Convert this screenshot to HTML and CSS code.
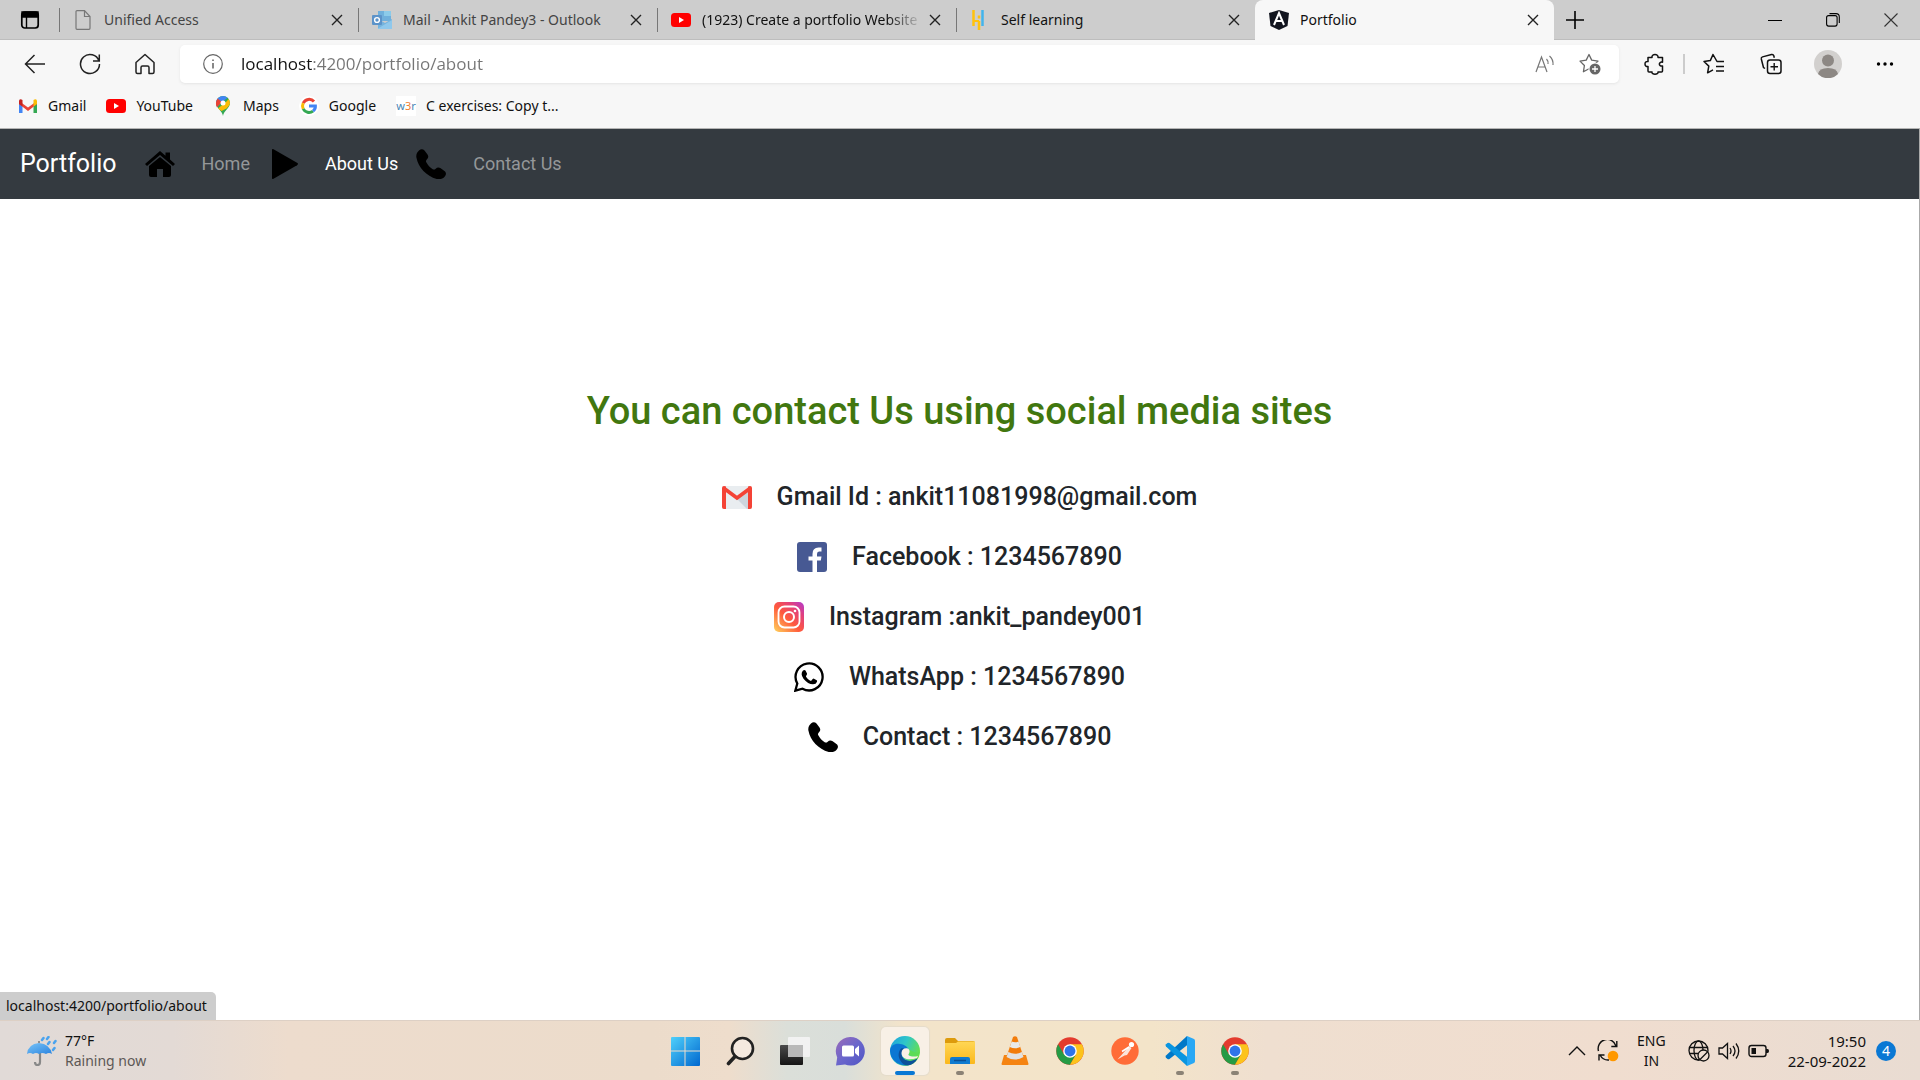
FILE: index.html
```html
<!DOCTYPE html>
<html lang="en">
<head>
<meta charset="utf-8">
<title>Portfolio</title>
<link rel="stylesheet" href="styles.css">
</head>
<body>
<svg class="defs" aria-hidden="true">
  <defs>
    <linearGradient id="win" x1="0" y1="0" x2="1" y2="1"><stop offset="0" stop-color="#4fd0fb"/><stop offset="1" stop-color="#0067cf"/></linearGradient>
    <linearGradient id="chatg" x1="0" y1="0" x2="1" y2="1"><stop offset="0" stop-color="#9c6bb8"/><stop offset=".5" stop-color="#6a66cc"/><stop offset="1" stop-color="#4f55c4"/></linearGradient>
    <linearGradient id="edgetop" x1="0" y1="0" x2="1" y2=".5"><stop offset="0" stop-color="#1c9fdf"/><stop offset=".5" stop-color="#2fc6c8"/><stop offset="1" stop-color="#66e04c"/></linearGradient>
    <linearGradient id="folderg" x1="0" y1="0" x2="0" y2="1"><stop offset="0" stop-color="#ffd755"/><stop offset="1" stop-color="#fbb81c"/></linearGradient>
    <linearGradient id="insta" x1="0" y1="1" x2="1" y2="0"><stop offset="0" stop-color="#ffd45c"/><stop offset=".45" stop-color="#ff5a3d"/><stop offset=".75" stop-color="#e2407c"/><stop offset="1" stop-color="#b13bd0"/></linearGradient>
    <linearGradient id="umb" x1="0" y1="0" x2="1" y2="1"><stop offset="0" stop-color="#79c4f7"/><stop offset="1" stop-color="#2b84e0"/></linearGradient>
    <linearGradient id="taskv" x1="0" y1="0" x2="0" y2="1"><stop offset="0" stop-color="#4a4a4a"/><stop offset="1" stop-color="#151515"/></linearGradient>
    <symbol id="x" viewBox="0 0 20 20"><path d="M5 5l10 10M15 5L5 15" fill="none" stroke="#222" stroke-width="1.4"/></symbol>
    <symbol id="yt" viewBox="0 0 20 20"><rect y="3" width="20" height="14" rx="3.5" fill="#f00"/><path d="M8 7l5 3-5 3z" fill="#fff"/></symbol>
    <symbol id="phone" viewBox="0 0 30 30"><path d="M3 1.500C5-.5 7 0 8.500 1.500l3 4c1.200 1.800 1 3.500-.5 4.800-1 1-1.300 1.800-.7 3 1.500 3 3.600 5.200 6.400 6.900 1.200.7 2 .5 3-.5 1.500-1.500 3.200-1.700 5-.4l3.700 2.800c1.700 1.300 2 3 .9 4.600-2 3-5 4.100-8.600 3.300C10.500 27 2.300 18.500.4 8.500-.1 5.600 1 3.300 3 1.500z" fill="#000"/></symbol>
    <symbol id="chrome" viewBox="0 0 48 48"><circle cx="24" cy="24" r="23.500" fill="#e33b2e"/><path d="M3.600 12.300A23.500 23.500 0 0 0 24 47.500l10.200-17.600L24 24 13.800 29.900z" fill="#259b45"/><path d="M24 47.500A23.500 23.500 0 0 0 44.400 12.300H24V24l10.200 5.900z" fill="#fcc31c"/><circle cx="24" cy="24" r="11.700" fill="#fff"/><circle cx="24" cy="24" r="9.300" fill="#2f74ea"/></symbol>
  </defs>
</svg>

<header class="browser">
  <div class="tabstrip">
    <button class="tab-actions" aria-label="Tab actions"><svg width="20" height="20" viewBox="0 0 20 20"><rect x="1.800" y="2" width="16.400" height="16" rx="3" fill="none" stroke="#000" stroke-width="1.700"/><path d="M2 2h16v5H2zM6.500 7v11" stroke="#000" stroke-width="1.400"/></svg></button>
    <div class="tabs">
      <div class="tab"><svg width="20" height="20" viewBox="0 0 20 20"><path d="M3 1.500Q3 .7 4 .7h7.500L17 6.500v11.800q0 1-1 1H4q-1 0-1-1zM11.500.7v5.800H17" fill="none" stroke="#777" stroke-width="1.200"/></svg><a href="#" class="tab-title muted">Unified Access</a><button class="close" aria-label="Close tab"><svg width="20" height="20"><use href="#x"/></svg></button></div>
      <div class="tab"><svg width="20" height="20" viewBox="0 0 20 20"><path d="M6 1h13v10H6z" fill="#6fb0dc"/><path d="M12 1h7v5h-7z" fill="#8bcbea"/><path d="M6 9l7 4 7-4v10H6z" fill="#75b3dd"/><path d="M6 18.500L20 10v9H6z" fill="#8fc8ec"/><rect y="5" width="10" height="10" rx="1" fill="#5c93c9"/><circle cx="5" cy="10" r="2.400" fill="none" stroke="#fff" stroke-width="1.400"/></svg><a href="#" class="tab-title muted">Mail - Ankit Pandey3 - Outlook</a><button class="close" aria-label="Close tab"><svg width="20" height="20"><use href="#x"/></svg></button></div>
      <div class="tab"><svg width="20" height="20"><use href="#yt"/></svg><a href="#" class="tab-title fade">(1923) Create a portfolio Website</a><button class="close" aria-label="Close tab"><svg width="20" height="20"><use href="#x"/></svg></button></div>
      <div class="tab"><svg width="20" height="20" viewBox="0 0 20 20"><path d="M3.500 0v16M9 5.500v3M9 11v9" stroke="#ffc20e" stroke-width="2.500"/><path d="M12.500 0v16" stroke="#42b4ec" stroke-width="2.500"/><path d="M4 11h5" stroke="#ffc20e" stroke-width="2"/></svg><a href="#" class="tab-title">Self learning</a><button class="close" aria-label="Close tab"><svg width="20" height="20"><use href="#x"/></svg></button></div>
      <div class="tab active"><svg width="20" height="20" viewBox="0 0 20 20"><path d="M10 0l10 3-1.500 13L10 20l-8.500-4L0 3z" fill="#12151f"/><path d="M5 15l5-12 5 12M7 11h6" fill="none" stroke="#fff" stroke-width="2"/></svg><a href="#" class="tab-title">Portfolio</a><button class="close" aria-label="Close tab"><svg width="20" height="20"><use href="#x"/></svg></button></div>
    </div>
    <button class="new-tab" aria-label="New tab"><svg width="20" height="20" viewBox="0 0 20 20"><path d="M10 1v18M1 10h18" stroke="#000" stroke-width="1.600"/></svg></button>
    <div class="window-controls">
      <button aria-label="Minimize"><svg width="14" height="14" viewBox="0 0 14 14"><path d="M0 7.500h14" stroke="#000"/></svg></button>
      <button aria-label="Restore"><svg width="14" height="14" viewBox="0 0 14 14"><rect x=".6" y="2.600" width="10.500" height="10.500" rx="2" fill="none" stroke="#000" stroke-width="1.100"/><path d="M3.500.6H10q3.300 0 3.300 3.300V10" fill="none" stroke="#000" stroke-width="1.100"/></svg></button>
      <button aria-label="Close"><svg width="14" height="14" viewBox="0 0 14 14"><path d="M.5.500l13 13M13.500.5l-13 13" stroke="#333" stroke-width="1.100"/></svg></button>
    </div>
  </div>

  <div class="toolbar">
    <div class="nav-buttons">
      <button aria-label="Back"><svg width="22" height="22" viewBox="0 0 22 22"><path d="M21 11H1.500M10.500 2l-9 9 9 9" fill="none" stroke="#222" stroke-width="1.500"/></svg></button>
      <button aria-label="Refresh"><svg width="22" height="22" viewBox="0 0 22 22"><path d="M20 8A9.500 9.500 0 1 0 20.500 11M20.300 1.500V8H14" fill="none" stroke="#222" stroke-width="1.500"/></svg></button>
      <button aria-label="Home"><svg width="22" height="22" viewBox="0 0 22 22"><path d="M2 9.500L11 1.500l9 8V19q0 1.500-1.500 1.500h-3.500v-6q0-1.500-1.500-1.500h-5q-1.500 0-1.500 1.500v6H3.500Q2 20.500 2 19z" fill="none" stroke="#222" stroke-width="1.500" stroke-linejoin="round"/></svg></button>
    </div>
    <div class="address">
      <svg width="20" height="20" viewBox="0 0 20 20"><circle cx="10" cy="10" r="9.300" fill="none" stroke="#666" stroke-width="1.200"/><path d="M10 9v5.500M10 5.500v1.500" stroke="#555" stroke-width="1.400"/></svg>
      <input class="url" type="text" aria-label="Address" value="localhost:4200/portfolio/about">
      <button aria-label="Read aloud"><svg width="20" height="20" viewBox="0 0 20 20"><path d="M1 18L6.500 3 12 18M3 13h7M11.500 5q2 2 1.500 5M14.500 2q4 3.500 3.500 9" fill="none" stroke="#777" stroke-width="1.200"/></svg></button>
      <button aria-label="Add to favorites"><svg width="22" height="22" viewBox="0 0 22 22"><path d="M10 1.500l2.700 5.600 6.300 1-4.600 4.400 1 6.200L10 15.800l-5.600 3 1-6.300L1 8.100l6.200-1z" fill="none" stroke="#666" stroke-width="1.300" stroke-linejoin="round"/><circle cx="16" cy="16" r="6.500" fill="#fff"/><circle cx="16" cy="16" r="5.500" fill="#666"/><path d="M16 13v6M13 16h6" stroke="#fff" stroke-width="1.300"/></svg></button>
    </div>
    <div class="tools">
      <button aria-label="Extensions"><svg width="22" height="22" viewBox="0 0 22 22"><path d="M4 4.500h4c-.8-4 6.800-4 6 0h4.500v4.700c-4.200-.8-4.200 4.600 0 3.800V18q0 1-1 1H14c.8 3-6.800 3-6 0H5q-1 0-1-1v-4.500c-4 .8-4-5.800 0-5z" fill="none" stroke="#111" stroke-width="1.500" stroke-linejoin="round"/></svg></button>
      <span class="divider"></span>
      <button aria-label="Favorites"><svg width="22" height="22" viewBox="0 0 22 22"><path d="M21 8.500h-7L10 1.500 7.300 7.600 1 8.500l4.800 4.600-1.200 6.700 5.400-3M13 13.500h8M13 18h8" fill="none" stroke="#111" stroke-width="1.500" stroke-linejoin="round"/></svg></button>
      <button aria-label="Collections"><svg width="22" height="22" viewBox="0 0 22 22"><path d="M5 15.500L3.500 14.500 1.300 6Q1 4.300 2.500 3.900L11.500 1.500q1.800-.4 2.300 1.300l.5 2" fill="none" stroke="#111" stroke-width="1.500"/><rect x="7.500" y="7" width="13.500" height="13.500" rx="2.500" fill="#f7f7f7" stroke="#111" stroke-width="1.500"/><path d="M14.200 10v7.500M10.500 13.700H18" stroke="#111" stroke-width="1.400"/></svg></button>
      <button aria-label="Profile"><svg width="28" height="28" viewBox="0 0 28 28"><circle cx="14" cy="14" r="14" fill="#d2d0ce"/><circle cx="14" cy="10.500" r="6" fill="#8d8884"/><path d="M4 24q1-6 10-6t10 6a14 14 0 0 1-20 0z" fill="#8d8884"/></svg></button>
      <button aria-label="Settings and more"><svg width="18" height="18" viewBox="0 0 18 18"><circle cx="2.500" cy="9" r="1.700"/><circle cx="9" cy="9" r="1.700"/><circle cx="15.500" cy="9" r="1.700"/></svg></button>
    </div>
  </div>

  <nav class="bookmarks" aria-label="Bookmarks">
    <a href="#"><svg width="20" height="20" viewBox="0 0 20 20"><path d="M1 5v12h3.500V8z" fill="#4285f4"/><path d="M19 5v12h-3.500V8z" fill="#34a853"/><path d="M1 5l9 6.500L19 5v3l-9 7-9-7z" fill="#ea4335"/><path d="M1 8V4.500q1-2 3.500-.5v6.500z" fill="#c5221f"/><path d="M19 8V4.500q-1-2-3.500-.5v6.500z" fill="#fbbc04"/></svg>Gmail</a>
    <a href="#"><svg width="20" height="20"><use href="#yt"/></svg>YouTube</a>
    <a href="#"><svg width="20" height="20" viewBox="0 0 20 20"><path d="M10 20C9.500 15 3 12 3 7a7 7 0 0 1 14 0c0 5-6.500 8-7 13z" fill="#34a853"/><path d="M3.800 10.500L14.500 1.800A7 7 0 0 0 3 7q0 2 .8 3.500z" fill="#4285f4"/><path d="M4.700 2.500l4 3.500L4 11.500Q1.500 7 4.700 2.500z" fill="#ea4335"/><path d="M5 12.500L14 5l1.500-2Q17 5 17 7.500q-1 3-3.500 5l-5 2.500z" fill="#fbbc04"/><circle cx="10" cy="7" r="2.500" fill="#fff"/></svg>Maps</a>
    <a href="#"><svg width="20" height="20" viewBox="0 0 20 20"><circle cx="10" cy="10" r="10" fill="#fff"/><g fill="none" stroke-width="3"><path d="M15 5.500A6.500 6.500 0 0 0 4.200 7.200" stroke="#ea4335"/><path d="M4.200 7.200a6.500 6.500 0 0 0 0 5.600" stroke="#fbbc05"/><path d="M4.200 12.800a6.500 6.500 0 0 0 9.800 2.300" stroke="#34a853"/><path d="M14 15.100A6 6 0 0 0 16.400 10H10" stroke="#4285f4"/></g></svg>Google</a>
    <a href="#"><span class="w3r">w<b>3</b>r</span>C exercises: Copy t...</a>
  </nav>
</header>

<div class="page">
  <nav class="navbar" aria-label="Main">
    <a href="#" class="brand">Portfolio</a>
    <a href="#" class="nav-item"><svg width="30" height="30" viewBox="0 0 30 30"><path d="M0 15L15 2l5.500 4.700V3.500h4.500v7.100L30 15l-2 2L15 6 2 17z"/><path d="M4 17L15 8l11 9v9q0 2-2 2h-6v-8h-6v8H6q-2 0-2-2z"/></svg><span>Home</span></a>
    <a href="#" class="nav-item current"><svg width="30" height="30" viewBox="0 0 30 30"><path d="M4 1q0-1.500 1.500-.7l23.500 13.500q2 1.200 0 2.400l-23.500 13.500Q4 30.500 4 29z"/></svg><span>About Us</span></a>
    <a href="#" class="nav-item"><svg width="30" height="30"><use href="#phone"/></svg><span>Contact Us</span></a>
  </nav>
  <main class="content">
    <h1>You can contact Us using social media sites</h1>
    <ul class="contacts">
      <li><svg width="30" height="30" viewBox="0 0 30 30"><rect y="4" width="30" height="23" rx="2" fill="#e9edf0"/><path d="M15 17l11-9v19h-1z" fill="#cdd5dd"/><path d="M0 6q0-2 2-2l2 .5V27H2q-2 0-2-2zM30 6q0-2-2-2l-2 .5V27h2q2 0 2-2z" fill="#f44336"/><path d="M1.500 6L15 16 28.500 6" fill="none" stroke="#f44336" stroke-width="3.800"/></svg>Gmail Id : ankit11081998@gmail.com</li>
      <li><svg width="30" height="30" viewBox="0 0 30 30"><rect width="30" height="30" rx="3" fill="#475993"/><path d="M15.500 30V18.500h-4v-4h4V12q0-6.500 6-6.500h3V9.500H22q-2 0-2 2.500v2.500h4.500l-.7 4H20V30z" fill="#fff"/></svg>Facebook : 1234567890</li>
      <li><svg width="30" height="30" viewBox="0 0 30 30"><rect width="30" height="30" rx="5" fill="url(#insta)"/><rect x="4.500" y="4.500" width="21" height="21" rx="6" fill="none" stroke="#fff" stroke-width="1.800"/><circle cx="15" cy="15" r="5" fill="none" stroke="#fff" stroke-width="2"/><circle cx="21" cy="9" r="1.300" fill="#fff"/></svg>Instagram :ankit_pandey001</li>
      <li><svg width="30" height="30" viewBox="0 0 30 30"><path d="M1.300 28.700L3.300 21.500A13.500 13.500 0 1 1 8.500 26.700z" fill="none" stroke="#000" stroke-width="2.300"/><path d="M9 8.500q1.500-1 2.500 0l1.500 3q.3 1-.8 2.200-.5.700 0 1.300 1.500 2.500 4 3.700.8.300 1.300-.3l1.200-1.400q.5-.6 1.300-.3l2.700 1.500q.6.400.3 1.500-.8 2.500-4 2.600-5 0-9.500-5.500-3.500-5-.5-8.300z"/></svg>WhatsApp : 1234567890</li>
      <li><svg width="30" height="30"><use href="#phone"/></svg>Contact : 1234567890</li>
    </ul>
  </main>
  <div class="status">localhost:4200/portfolio/about</div>
</div>

<footer class="taskbar">
  <button class="weather"><svg width="30" height="30" viewBox="0 0 30 30"><path d="M13 14v12q0 3-2.500 3T8 26" fill="none" stroke="#888" stroke-width="2.200"/><path d="M0 18Q1 8 12 7q11 1 13 11-3-2-6 0-4-2-7 0-3-2-6 0-3-2-6 0z" fill="url(#umb)"/><path d="M15 4l1.500-2M20 3l1.500-2M21 8l1.500-2M27 7l1.500-2M26 14l1.500-2" stroke="#4aa3ee" stroke-width="2.500" stroke-linecap="round"/><path d="M12 7V5" stroke="#777" stroke-width="1.500"/></svg><span class="weather-text"><span>77°F</span><span class="dim">Raining now</span></span></button>

  <div class="apps">
    <button aria-label="Start"><svg width="30" height="30" viewBox="0 0 30 30"><path d="M1 2q0-1 1-1h12.500v13.500H1zM15.500 1H29q1 0 1 1v12.500H15.500zM1 15.500h13.500V30H2q-1 0-1-1zM15.500 15.500H30V29q0 1-1 1H15.500z" fill="url(#win)"/></svg></button>
    <button aria-label="Search"><svg width="30" height="30" viewBox="0 0 30 30"><circle cx="17.500" cy="12.500" r="10.500" fill="#f4e9df" stroke="#222" stroke-width="2.600"/><path d="M10 20.500L3.500 27.500" stroke="#222" stroke-width="3.600" stroke-linecap="round"/></svg></button>
    <button aria-label="Task view"><svg width="30" height="30" viewBox="0 0 30 30"><rect y="9" width="23" height="20" rx="1" fill="url(#taskv)"/><rect x="8" y="1" width="22" height="20" rx="1" fill="#f2f2f2"/><path d="M8 9h15v12H8z" fill="#b9b9b9"/></svg></button>
    <button aria-label="Chat"><svg width="30" height="30" viewBox="0 0 30 30"><path d="M15.500 1A14.300 14.300 0 1 1 10 28.500L1 29.500l1.200-8A14.300 14.300 0 0 1 15.500 1z" fill="url(#chatg)"/><rect x="7" y="9.500" width="12" height="11" rx="1.500" fill="#fff"/><path d="M20 13l4-3.500v11L20 17z" fill="#fff"/></svg></button>
    <button class="running focused" aria-label="Edge"><svg width="30" height="30" viewBox="0 0 30 30"><circle cx="15" cy="15" r="15" fill="url(#edgetop)"/><path d="M0 15C0 9 6 7 10 8c5 .5 8.500 3.500 8.500 6.500-6-2-8 3-6 6.500 2 4 8 6 15 1.500A15 15 0 0 1 0 15z" fill="#0b77d3"/><path d="M12 12c-4 2.500-4.500 9-1 13.500 2 3 5 4.500 7 4 4-.8 7.500-3 9.500-7C20 27 14 24.500 12 20.500c-1-2.500-.5-6 2-7.500z" fill="#0d4f9a"/><path d="M30 15.500c-.5 4-5 5-10 4-1.500-.5-1.800-1-1-2 .8-1.500.3-3-1-4 3 0 8 5.500 12 2z" fill="#5bdc55"/><path d="M18 12.500q-6-1-6.500 4.500 0 4.500 5 6 5 1 10.500-1l1-2q-4 1-8 0-2.500-1-1-2.500 1.500-3-1-5z" fill="#f8f0e6"/></svg></button>
    <button class="running" aria-label="File Explorer"><svg width="30" height="30" viewBox="0 0 30 30"><path d="M0 4q0-2 2-2h8l3 3h15q2 0 2 2v8H0z" fill="#dd9b0c"/><path d="M0 7h11l2-1.500h17V27q0 1-1 1H1q-1 0-1-1z" fill="url(#folderg)"/><path d="M5 28v-5q0-2 2-2h16q2 0 2 2v5z" fill="#0f7bd0"/><path d="M9 24.500h12" stroke="#0a4f94" stroke-width="1.500"/></svg></button>
    <button aria-label="VLC"><svg width="30" height="30" viewBox="0 0 30 30"><path d="M4 19h22l2.500 9q0 1-1 1h-25q-1 0-1-1z" fill="#f58412"/><path d="M13 1q2-1.500 4 0l6.500 20q-8.500 5-17 0z" fill="#f27c0b"/><path d="M11.700 5.500q3.500 1.500 6.800 0l1.800 5.500q-5 2.500-10.500 0z" fill="#e9e9e9"/><path d="M8.300 16q6.700 3.500 13.500 0l1.700 5q-8.500 5-17 0z" fill="#e2e2e2"/></svg></button>
    <button aria-label="Chrome"><svg width="28" height="28"><use href="#chrome"/></svg></button>
    <button aria-label="Postman"><svg width="28" height="28" viewBox="0 0 28 28"><circle cx="14" cy="14" r="13.700" fill="#ff6c37"/><circle cx="20.500" cy="7.500" r="2.600" fill="#fff"/><path d="M18 9l2.500 2-4.500 7-2.500.5-7 4L14 14z" fill="#fbe5da"/><path d="M18 10l-7 4.500" stroke="#fff" stroke-width="1.500"/></svg></button>
    <button class="running" aria-label="Visual Studio Code"><svg width="30" height="30" viewBox="0 0 30 30"><path d="M22 0L1 19.500q-1 1.200 0 2.200l1.500 1.300q1 .7 2 0L23 8.500z" fill="#0078c8"/><path d="M22 30L1 10.500q-1-1.200 0-2.200L2.500 7q1-.7 2 0L23 21.500z" fill="#0a95e0"/><path d="M22 0l7 3q1 .5 1 2v20q0 1.500-1 2l-7 3z" fill="#29a8f5"/></svg></button>
    <button class="running" aria-label="Chrome"><svg width="28" height="28"><use href="#chrome"/></svg></button>
  </div>

  <div class="tray">
    <button aria-label="Show hidden icons"><svg width="20" height="20" viewBox="0 0 20 20"><path d="M2 14l8-8 8 8" fill="none" stroke="#111" stroke-width="1.400"/></svg></button>
    <button aria-label="Updates"><svg width="22" height="22" viewBox="0 0 22 22"><path d="M1.500 11A9 9 0 0 1 19 6M19.800 1v5.500h-5.500M2 20.500V15h5.500M3 15q3 5.500 9 5" fill="none" stroke="#111" stroke-width="1.400"/><circle cx="16" cy="16" r="5.300" fill="#ff9800"/></svg></button>
    <button class="stack language"><span>ENG</span><span>IN</span></button>
    <button class="system" aria-label="Network, volume and battery">
      <svg width="22" height="22" viewBox="0 0 22 22"><g fill="none" stroke="#111" stroke-width="1.300"><circle cx="10.500" cy="10.500" r="9.500"/><ellipse cx="10.500" cy="10.500" rx="4.500" ry="9.500"/><path d="M1.500 7.500h18M1.500 13.500h18"/><circle cx="15.500" cy="15.500" r="5.500" fill="#efdfd3"/><path d="M12 19.500l7.500-7.500"/></g></svg>
      <svg width="22" height="22" viewBox="0 0 22 22"><path d="M1 8h3.500L9.500 3.500v15L4.500 14H1zM12 8q2 3 0 6M15 6q4 5 0 10M18 3.500q5.500 7.500 0 15" fill="none" stroke="#111" stroke-width="1.300"/></svg>
      <svg width="22" height="22" viewBox="0 0 22 22"><rect x="1" y="5.500" width="17" height="11" rx="2.500" fill="none" stroke="#111" stroke-width="1.400"/><path d="M3.500 8h4.500v6H3.500zM18 9h1.500q1.500 0 1.500 2t-1.500 2H18z" fill="#111"/></svg>
    </button>
    <button class="stack clock"><span>19:50</span><span>22-09-2022</span></button>
    <span class="badge">4</span>
  </div>
</footer>
</body>
</html>
```
FILE: styles.css
```css
* {
  box-sizing: border-box;
}

body {
  margin: 0;
  min-height: 100vh;
  display: flex;
  flex-direction: column;
  background: #fff;
  font-family: "Noto Sans", "Open Sans", sans-serif;
  font-size: 14px;
  line-height: 20px;
  color: #111;
}

a {
  color: inherit;
  text-decoration: none;
}

button {
  display: flex;
  align-items: center;
  justify-content: center;
  padding: 0;
  border: 0;
  background: none;
  font: inherit;
  color: inherit;
}

svg {
  display: block;
  flex: none;
}

.defs {
  position: absolute;
  width: 0;
  height: 0;
}

/* Browser chrome */
.browser {
  background: #f7f7f7;
  border-bottom: 1px solid #b4b4b4;
}

.tabstrip {
  display: flex;
  height: 40px;
  background: #cdcdcd;
  box-shadow: inset 0 -1px 0 #bdbdbd;
}

.tab-actions {
  width: 59px;
}

.tabs {
  display: flex;
  flex: 0 1 1495px;
  min-width: 0;
}

.tab {
  flex: 1;
  min-width: 0;
  display: flex;
  align-items: center;
  padding: 0 11px 0 14px;
  background: linear-gradient(#777, #777) left center / 1px 24px no-repeat;
}

.tab.active {
  background: #f7f7f7;
  border-radius: 8px 8px 0 0;
}

.tab-title {
  flex: 1;
  min-width: 0;
  margin: 0 2px 0 11px;
  overflow: hidden;
  white-space: nowrap;
}

.fade {
  mask-image: linear-gradient(to right, #000 calc(100% - 36px), transparent);
}

.muted {
  color: #444;
}

.new-tab {
  width: 42px;
}

.window-controls {
  display: flex;
  margin-left: auto;
}

.window-controls button {
  width: 58px;
}

.toolbar {
  display: flex;
  align-items: center;
  height: 48px;
  padding: 0 7px;
}

.nav-buttons {
  display: flex;
}

.nav-buttons button {
  width: 55px;
}

.address {
  flex: 1;
  display: flex;
  align-items: center;
  height: 38px;
  margin-left: 8px;
  padding: 0 16px 0 23px;
  border-radius: 5px;
  background: #fff;
  box-shadow: 0 1px 3px #e4e4e4;
}

.address button {
  width: 26px;
  margin-left: 19px;
}

.url {
  flex: 1;
  min-width: 0;
  margin-left: 18px;
  padding: 0;
  border: 0;
  outline: 0;
  font: 17px/24px "Open Sans", "Noto Sans", sans-serif;
  color: transparent;
  background: linear-gradient(to right, #111 72px, #757575 72px);
  background-clip: text;
}

.tools {
  display: flex;
  align-items: center;
  margin-left: 7px;
}

.tools button {
  width: 57px;
}

.divider {
  width: 2px;
  height: 20px;
  background: #ccc;
}

.bookmarks {
  display: flex;
  align-items: center;
  gap: 20px;
  height: 40px;
  padding: 0 18px 4px;
}

.bookmarks a {
  display: flex;
  align-items: center;
  gap: 10px;
}

.w3r {
  width: 20px;
  background: #fff;
  font-size: 11px;
  text-align: center;
  color: #4a86b4;
}

.w3r b {
  font-weight: 400;
  color: #f08030;
}

/* Web page */
.page {
  position: relative;
  flex: 1;
  display: flex;
  flex-direction: column;
  border-right: 1px solid #aaa;
  font-family: Roboto, sans-serif;
}

.navbar {
  display: flex;
  align-items: center;
  height: 70px;
  padding: 0 20px;
  background: #343a40;
  color: #949799;
  font-size: 18px;
}

.brand {
  margin-right: 10px;
  font-size: 25px;
  line-height: 30px;
  color: #fff;
}

.nav-item {
  display: flex;
  align-items: center;
  gap: 27px;
  padding-left: 18px;
}

.current {
  color: #fff;
}

.content {
  flex: 1;
  display: flex;
  flex-direction: column;
  align-items: center;
  padding: 190px 20px 60px;
}

h1 {
  margin: 0 0 48px;
  font-size: 38px;
  font-weight: 500;
  line-height: 45px;
  color: #41770f;
}

.contacts {
  display: flex;
  flex-direction: column;
  align-items: center;
  gap: 30px;
  margin: 0;
  padding: 0;
  list-style: none;
  font-size: 25px;
  font-weight: 500;
  line-height: 30px;
  color: #212529;
}

.contacts li {
  display: flex;
  align-items: center;
  gap: 25px;
}

.status {
  position: absolute;
  left: 0;
  bottom: 0;
  height: 28px;
  padding: 0 9px 0 6px;
  border-radius: 0 5px 0 0;
  background: #cdcdcd;
  font: 14px/28px "Noto Sans", "Open Sans", sans-serif;
  color: #111;
}

/* Taskbar */
.taskbar {
  display: grid;
  grid-template-columns: 1fr auto 1fr;
  align-items: center;
  height: 60px;
  border-top: 1px solid #ddd0c5;
  background: linear-gradient(to right, #e1dad7 0%, #e3dad5 9%, #eddccd 15%, #ecdccb 34%, #eeddcc 38%, #dbdfd9 41%, #d9deda 44%, #f3e4ca 47%, #f3e4c9 60%, #efdfd0 66%, #f0ddcf 84%, #e9dcd2 100%);
}

.weather {
  justify-self: start;
  gap: 8px;
  padding-left: 27px;
}

.weather-text,
.stack {
  display: flex;
  flex-direction: column;
  align-items: flex-start;
}

.dim {
  color: #5c5855;
}

.apps {
  display: flex;
  gap: 7px;
}

.apps button {
  position: relative;
  width: 48px;
  height: 48px;
  border-radius: 5px;
}

.apps .focused {
  background: #f8f0e6;
  box-shadow: 0 0 1px 1px #e5dccb;
}

.running::after {
  content: "";
  position: absolute;
  left: 20px;
  bottom: 0;
  width: 8px;
  height: 4px;
  border-radius: 2px;
  background: #8b8275;
}

.apps .focused::after {
  left: 14px;
  width: 20px;
  background: #0a78d4;
}

.tray {
  justify-self: end;
  display: flex;
  align-items: center;
  gap: 10px;
  padding-right: 24px;
}

.language {
  align-items: center;
  margin: 0 12px 0 8px;
}

.system {
  gap: 8px;
}

.clock {
  align-items: flex-end;
  margin-left: 8px;
  font-size: 15px;
}

.badge {
  width: 20px;
  border-radius: 50%;
  background: #0a78d4;
  color: #fff;
  text-align: center;
}
```
